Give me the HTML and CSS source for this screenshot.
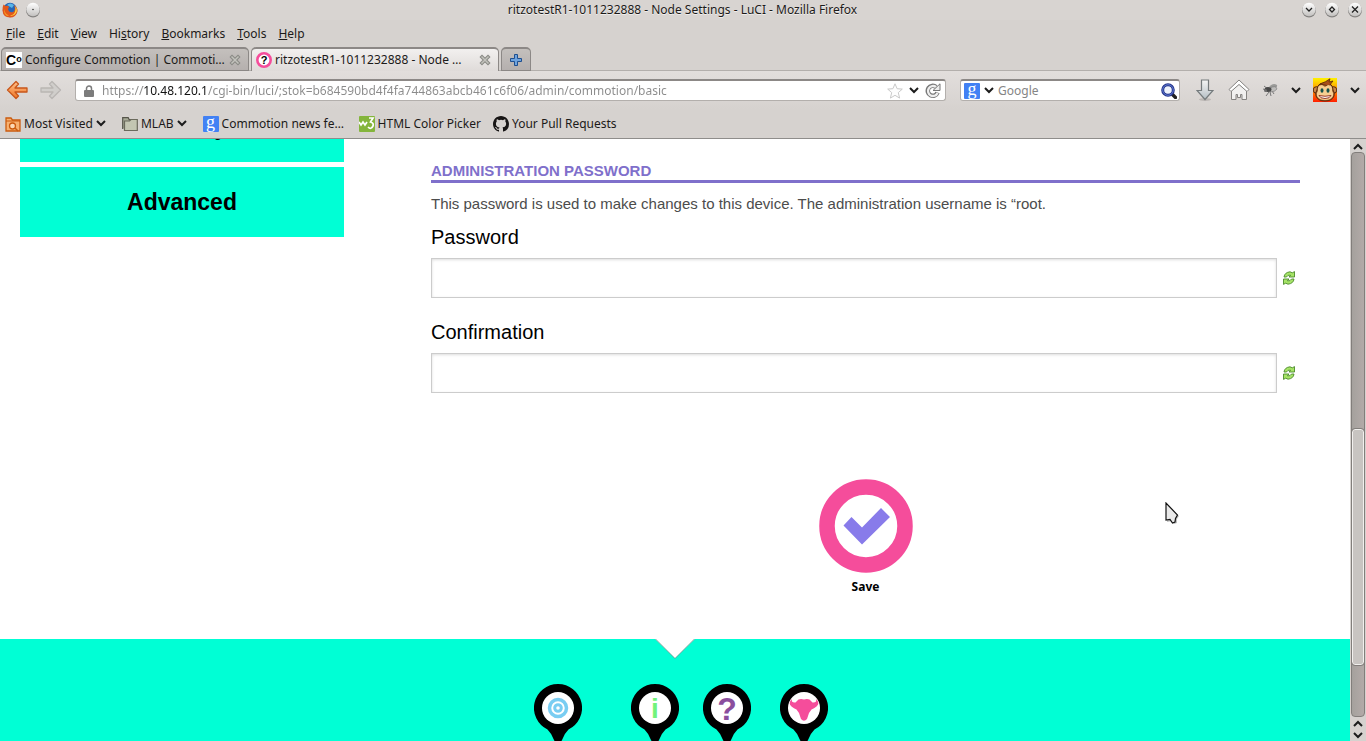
FILE: index.html
```html
<!DOCTYPE html>
<html lang="en">
<head>
<meta charset="utf-8">
<title>ritzotestR1-1011232888 - Node Settings - LuCI</title>
<link rel="stylesheet" href="styles.css">
</head>
<body>
<svg class="defs" aria-hidden="true">
  <defs>
    <symbol id="chevron" viewBox="0 0 10 7"><path d="M1 1l4 4 4-4" fill="none" stroke="#1c1c1c" stroke-width="2"/></symbol>
    <symbol id="chevron-up" viewBox="0 0 10 7"><path d="M1 6l4-4 4 4" fill="none" stroke="#1c1c1c" stroke-width="2"/></symbol>
    <symbol id="cross" viewBox="0 0 12 12"><path d="M3 3l6 6M9 3l-6 6" fill="none" stroke="#8a8a85" stroke-width="3.600" stroke-linecap="square"/><path d="M3 3l6 6M9 3l-6 6" fill="none" stroke="#c3c3bd" stroke-width="1.500" stroke-linecap="square"/></symbol>
    <symbol id="refresh" viewBox="0 0 12 14">
      <g fill="#a6e466" stroke="#4c8a2c" stroke-width=".9">
        <path id="half" d="M1 6Q1.500 1.500 7 .8L9.300 1.800 11.500 .6V6H6L7.600 4.200Q4.600 3.600 3.500 6z"/>
        <path d="M11 8Q10.500 12.500 5 13.200L2.700 12.200 .5 13.400V8H6L4.400 9.800Q7.400 10.400 8.500 8z"/>
      </g>
    </symbol>
    <symbol id="pin" viewBox="0 0 48 60"><path d="M24 0a24 24 0 0 1 10.500 45.600Q31 49 28.500 55L26 60h-4l-2.500-5Q17 49 13.500 45.600A24 24 0 0 1 24 0z"/><circle cx="24" cy="24" r="16" fill="#fff"/></symbol>
    <linearGradient id="orange" x2="0" y2="1"><stop stop-color="#ffc08a"/><stop offset="1" stop-color="#ef7625"/></linearGradient>
    <linearGradient id="knob" x2="0" y2="1"><stop stop-color="#fff"/><stop offset="1" stop-color="#c3c1bf"/></linearGradient>
    <linearGradient id="steel" x2="0" y2="1"><stop stop-color="#f5f5f5"/><stop offset="1" stop-color="#b4bec4"/></linearGradient>
    <linearGradient id="fire" x2="0" y2="1"><stop stop-color="#fff200"/><stop offset=".45" stop-color="#ff9c00"/><stop offset="1" stop-color="#ff1e00"/></linearGradient>
  </defs>
</svg>

<div class="window">
  <header class="titlebar">
    <div class="title-side">
      <svg class="i16" viewBox="0 0 16 16"><circle cx="8" cy="8" r="7.200" fill="#2765b5"/><path d="M5 3Q8 0 12 3L10 6z" fill="#58b5e8"/><path d="M1.500 2.500L3.500 4Q6 3 7 5L6 7Q7 11 11 10Q13 9 13 6L12 3Q16 6 15.500 9.500Q14 15.500 8 15.500Q1 15.500 .5 8.500Q.3 5 1.500 2.500z" fill="#e2571b"/><path d="M13.300 4Q16 8 14 11Q12 14.500 8 13.500Q12 13 13 10Q14 7 13.300 4z" fill="#ffd33d"/><path d="M2 7Q3 12 7 13.500L5 14Q1.500 12 2 7z" fill="#f89a25"/></svg>
      <button class="knob" aria-label="Window menu"><svg viewBox="0 0 16 16"><circle cx="8" cy="8.500" r="7" fill="#858381"/><circle cx="8" cy="7.500" r="6.700" fill="url(#knob)"/><circle cx="8" cy="7.500" r=".8" fill="#333"/></svg></button>
    </div>
    <div class="title">ritzotestR1-1011232888 - Node Settings - LuCI - Mozilla Firefox</div>
    <div class="title-side end">
      <button class="knob" aria-label="Minimize"><svg viewBox="0 0 16 16"><circle cx="8" cy="8.500" r="7" fill="#858381"/><circle cx="8" cy="7.500" r="6.700" fill="url(#knob)"/><path d="M5 6l3 3 3-3" fill="none" stroke="#222" stroke-width="1.300"/></svg></button>
      <button class="knob" aria-label="Maximize"><svg viewBox="0 0 16 16"><circle cx="8" cy="8.500" r="7" fill="#858381"/><circle cx="8" cy="7.500" r="6.700" fill="url(#knob)"/><path d="M8 5l2.500 2.500L8 10 5.500 7.500z" fill="none" stroke="#222" stroke-width="1.300"/></svg></button>
      <button class="knob" aria-label="Close"><svg viewBox="0 0 16 16"><circle cx="8" cy="8.500" r="7" fill="#858381"/><circle cx="8" cy="7.500" r="6.700" fill="url(#knob)"/><path d="M5 4.500l6 6M11 4.500l-6 6" fill="none" stroke="#222" stroke-width="1.300"/></svg></button>
    </div>
  </header>

  <nav class="menubar" aria-label="Menu">
    <button><u>F</u>ile</button><button><u>E</u>dit</button><button><u>V</u>iew</button><button>Hi<u>s</u>tory</button><button><u>B</u>ookmarks</button><button><u>T</u>ools</button><button><u>H</u>elp</button>
  </nav>

  <div class="tabs">
    <div class="tab">
      <span class="fav-co">C<small>o</small></span>
      <button class="tab-label">Configure Commotion | Commoti…</button>
      <button class="icon" aria-label="Close tab"><svg class="i12"><use href="#cross"/></svg></button>
    </div>
    <div class="tab active">
      <svg class="i16" viewBox="0 0 16 16"><circle cx="8" cy="8" r="6.700" fill="#fff" stroke="#f54d9b" stroke-width="2.600"/><text class="svg-bold" x="8" y="12" font-size="11" text-anchor="middle">?</text></svg>
      <button class="tab-label">ritzotestR1-1011232888 - Node …</button>
      <button class="icon" aria-label="Close tab"><svg class="i12"><use href="#cross"/></svg></button>
    </div>
    <button class="tab new" aria-label="New tab"><svg class="i12" viewBox="0 0 12 12"><path d="M4.500 .5h3v4h4v3h-4v4h-3v-4h-4v-3h4z" fill="#6ea3dd" stroke="#1f4f8f"/></svg></button>
  </div>

  <div class="navbar">
    <button class="icon" aria-label="Back"><svg class="arrow" viewBox="0 0 22 20"><path d="M10 1.500L1.500 10 10 18.500l2.500-2.500-3.500-4H21V8H9l3.500-4z" fill="url(#orange)" stroke="#c8561a" stroke-width="1.300" stroke-linejoin="round"/></svg></button>
    <button class="icon forward" aria-label="Forward"><svg class="arrow" viewBox="0 0 22 20"><path d="M12 1.500L20.500 10 12 18.500 9.500 16l3.500-4H1V8h12L9.500 4z" fill="#d0cecb" stroke="#b9b6b3" stroke-width="1.300" stroke-linejoin="round"/></svg></button>
    <div class="field address">
      <svg class="lock" viewBox="0 0 10 12"><path d="M2.500 6V3.500a2.500 2.500 0 0 1 5 0V6" fill="none" stroke="#7c7c7c" stroke-width="1.500"/><rect y="5" width="10" height="7" rx="1" fill="#7c7c7c"/></svg>
      <input class="url" type="text" aria-label="Address" value="https://10.48.120.1/cgi-bin/luci/;stok=b684590bd4f4fa744863abcb461c6f06/admin/commotion/basic">
      <button class="icon" aria-label="Bookmark this page"><svg class="i16" viewBox="0 0 16 16"><path d="M8 .8l2.100 4.900 5.200.4-4 3.500 1.300 5.500L8 12.300l-4.600 2.800 1.300-5.500-4-3.500 5.200-.4z" fill="#fdfdfd" stroke="#c9c9c9"/></svg></button>
      <button class="icon" aria-label="History"><svg class="chev"><use href="#chevron"/></svg></button>
      <button class="icon" aria-label="Reload"><svg class="i16" viewBox="0 0 16 16"><path d="M12.500 9.500A5 5 0 1 1 11 4" fill="none" stroke="#777" stroke-width="4.500"/><path d="M12.600 10A5 5 0 1 1 11 4" fill="none" stroke="#eee" stroke-width="2.300"/><path d="M8 7.500h7V.8z" fill="#eee" stroke="#777"/></svg></button>
    </div>
    <div class="field search">
      <span class="fav-g">g</span>
      <button class="icon" aria-label="Search engine"><svg class="chev"><use href="#chevron"/></svg></button>
      <input type="text" aria-label="Search" placeholder="Google">
      <button class="icon" aria-label="Go"><svg class="i16" viewBox="0 0 16 16"><path d="M11 11l3.500 3.500" stroke="#222" stroke-width="3.400" stroke-linecap="round"/><circle cx="7" cy="7" r="5.300" fill="#eef3fc" stroke="#26358c" stroke-width="3"/><circle cx="7" cy="7" r="5.300" fill="none" stroke="#5f7bd0" stroke-width="1"/></svg></button>
    </div>
    <div class="tools">
      <button class="icon" aria-label="Downloads"><svg class="down" viewBox="0 0 18 22"><ellipse cx="9" cy="20.500" rx="6" ry="1.500" fill="#bbb7b4"/><path d="M5.500 1h7v10.500H17L9 20.500 1 11.500h4.500z" fill="url(#steel)" stroke="#747a7c" stroke-width="1.200"/></svg></button>
      <button class="icon home-button" aria-label="Home"><svg class="home" viewBox="0 0 22 22"><path d="M3.500 11.500v9h4.500v-5h1.500v3h3v-3H14v5h4.500v-9L11 5z" fill="#f1f0ef" stroke="#858381"/><path d="M11 1L1 10.500l2 2L11 5.500l8 7 2-2z" fill="#fff" stroke="#858381"/></svg></button>
      <button class="icon fly-button" aria-label="Fly"><svg class="fly" viewBox="0 0 16 14"><path d="M1 6l4 1M2 3l4 3M4 13l3-4M9 13l-1-4M12 11l-2-3" stroke="#777" stroke-width="1"/><path d="M7 4Q11-1 15 2Q16 5 10 7z" fill="#9a9a98"/><path d="M8 5Q14 2 15 6Q13 9 8 9z" fill="#bebdbb" stroke="#777" stroke-width=".6"/><ellipse cx="6" cy="6.500" rx="3.500" ry="2.500" fill="#484848"/><circle cx="3.500" cy="7.500" r="1.500" fill="#707070"/></svg></button>
      <button class="icon" aria-label="Fly menu"><svg class="chev"><use href="#chevron"/></svg></button>
      <button class="icon monkey-button" aria-label="Monkey"><svg class="monkey" viewBox="0 0 24 24"><path fill="url(#fire)" d="M0 0h24v24H0z"/><circle cx="3.500" cy="12" r="3.300" fill="#c98746" stroke="#59290b"/><circle cx="20.500" cy="12" r="3.300" fill="#c98746" stroke="#59290b"/><path d="M4 12Q4 5 12 5t8 7q2 3 1 6-2 5-9 5t-9-5q-1-3 1-6z" fill="#a96b32" stroke="#59290b"/><path d="M7 6Q13 4 17 .8L16 4l4-1-4 5z" fill="#a6501a" stroke="#59290b" stroke-width=".8"/><path d="M5 13Q4 7 9 7l3 2 3-2q5 0 4 6 2 2 1 5-2 4-8 4t-8-4q-1-3 1-5z" fill="#f6cf91"/><ellipse cx="9" cy="12.500" rx="1.500" ry="2.300" fill="#15514a"/><ellipse cx="15" cy="12.500" rx="1.500" ry="2.300" fill="#15514a"/><path d="M6 17.500q6 1.500 12 0-1 3-6 3t-6-3z" fill="#fff" stroke="#8d2616" stroke-width=".9"/></svg></button>
      <button class="icon" aria-label="Monkey menu"><svg class="chev"><use href="#chevron"/></svg></button>
    </div>
  </div>

  <nav class="bookmarks" aria-label="Bookmarks">
    <button class="bm visited"><svg class="i16" viewBox="0 0 16 16"><path d="M1 15V2h5l1.500 2H15v11z" fill="#f7b170" stroke="#cb5b0e" stroke-width="1.300"/><path d="M1 5h14" stroke="#cb5b0e"/><circle cx="7.500" cy="10" r="3" fill="#fbd9b6" stroke="#cb5b0e" stroke-width="1.300"/><path d="M10 12l3 3" stroke="#cb5b0e" stroke-width="1.500"/></svg>Most Visited<svg class="chev"><use href="#chevron"/></svg></button>
    <button class="bm mlab"><svg class="i16" viewBox="0 0 16 16"><path d="M.7 13V1.700h5.500l1 2H12" fill="#a8ab98" stroke="#56554a" stroke-width="1.200"/><path d="M2.500 14.500V5h5l1.500-1.500h6.300v11z" fill="#c3c6b2" stroke="#6a6a5c" stroke-width="1.200"/></svg>MLAB<svg class="chev"><use href="#chevron"/></svg></button>
    <a class="bm news" href="#"><span class="fav-g">g</span>Commotion news fe…</a>
    <a class="bm picker" href="#"><svg class="i16" viewBox="0 0 16 16"><rect width="16" height="16" rx="1" fill="#84b53c"/><path d="M0 6l2 3 2-3 2 3 2-3M10 2h4l-2.500 4Q15 7 14 10q-2 4-5 1" fill="none" stroke="#fff" stroke-width="1.700"/></svg>HTML Color Picker</a>
    <a class="bm" href="#"><svg class="i16" viewBox="0 0 16 16"><path fill="#171515" fill-rule="evenodd" d="M8 0C3.580 0 0 3.580 0 8c0 3.540 2.290 6.530 5.470 7.590.4.070.55-.17.55-.38 0-.19-.01-.82-.01-1.490-2.010.37-2.530-.49-2.690-.94-.09-.23-.48-.94-.82-1.130-.28-.15-.68-.52-.01-.53.63-.01 1.080.58 1.230.82.72 1.210 1.870.87 2.330.66.070-.52.28-.87.51-1.070-1.780-.2-3.640-.89-3.640-3.950 0-.87.31-1.590.82-2.150-.08-.2-.36-1.020.08-2.120 0 0 .67-.21 2.200.82a7.600 7.600 0 0 1 4 0c1.530-1.040 2.200-.82 2.200-.82.44 1.100.16 1.920.08 2.120.51.560.82 1.270.82 2.150 0 3.070-1.870 3.750-3.650 3.950.29.25.54.73.54 1.480 0 1.070-.01 1.930-.01 2.200 0 .21.15.46.55.38A8 8 0 0 0 16 8c0-4.420-3.580-8-8-8z"/></svg>Your Pull Requests</a>
  </nav>

  <div class="viewport">
    <div class="page">
      <div class="columns">
        <nav class="side" aria-label="Settings">
          <a href="#">Security</a>
          <a href="#">Advanced</a>
        </nav>
        <main class="main">
          <form>
            <h2>Administration Password</h2>
            <p>This password is used to make changes to this device. The administration username is “root.</p>
            <div class="group">
              <label for="pw">Password</label>
              <div class="entry"><input id="pw" type="password"><button type="button" class="icon" aria-label="Reveal password"><svg class="refresh"><use href="#refresh"/></svg></button></div>
            </div>
            <div class="group">
              <label for="pw2">Confirmation</label>
              <div class="entry"><input id="pw2" type="password"><button type="button" class="icon" aria-label="Reveal confirmation"><svg class="refresh"><use href="#refresh"/></svg></button></div>
            </div>
            <button type="button" class="save">
              <svg viewBox="0 0 94 94"><circle cx="47" cy="47" r="39" fill="#fff" stroke="#f54d9b" stroke-width="15.500"/><path d="M24.500 46.500l8-8.500 10.500 10.500L62 29l9 9-28 27.500z" fill="#887bea"/></svg>
              Save
            </button>
          </form>
        </main>
      </div>
      <footer class="footer">
        <svg class="notch" viewBox="0 0 40 20"><path d="M0 0h40L20 19.500z" fill="#fff"/><path d="M.5 0L20 19.500 39.500 0" fill="none" stroke="#4a8377" stroke-width=".7"/></svg>
        <div class="pins">
          <a class="pin wide" href="#" aria-label="Network"><svg viewBox="0 0 48 60"><use href="#pin"/><g fill="none" stroke="#79cdf2"><circle cx="24" cy="24" r="8.500" stroke-width="3.500"/><circle cx="24" cy="24" r="3.300" stroke-width="3"/></g></svg></a>
          <a class="pin info" href="#" aria-label="Information"><svg viewBox="0 0 48 60"><use href="#pin"/><text class="svg-bold" x="24" y="34" font-size="28" text-anchor="middle" fill="#72f37b">i</text></svg></a>
          <a class="pin help" href="#" aria-label="Help"><svg viewBox="0 0 48 60"><use href="#pin"/><text class="svg-bold" x="24" y="36" font-size="32" text-anchor="middle" fill="#8a4e9e">?</text></svg></a>
          <a class="pin bug" href="#" aria-label="Report"><svg viewBox="0 0 48 60"><use href="#pin"/><path d="M12 15Q7.500 19 11.500 22.500Q14 24.500 16.500 25.500L19 29 21 35Q24 38.500 27 35L29 29 31.500 25.500Q34 24.500 36.500 22.500Q40.500 19 36 15Q37 19 32.500 18.500L29.500 15.500Q27 14.500 24 15.500Q21 14.500 18.500 15.500L15.500 18.500Q11 19 12 15z" fill="#f54d9b"/></svg></a>
        </div>
      </footer>
    </div>
    <div class="scrollbar">
      <button class="icon" aria-label="Scroll up"><svg class="chev"><use href="#chevron-up"/></svg></button>
      <div class="track"><div class="thumb"></div></div>
      <button class="icon" aria-label="Scroll up"><svg class="chev"><use href="#chevron-up"/></svg></button>
      <button class="icon" aria-label="Scroll down"><svg class="chev"><use href="#chevron"/></svg></button>
    </div>
  </div>
</div>
<svg class="cursor" viewBox="0 0 16 24"><path d="M2 3v17l5-1 2 3 3-1v-4l2-3z" fill="#000" opacity=".25"/><path d="M1 1v17l4-.5 2.500 3.500 2.500-1 .5-3.500L12.500 13z" fill="#e9e9e9" stroke="#111" stroke-width="1.200"/></svg>
</body>
</html>
```
FILE: styles.css
```css
* { box-sizing: border-box; }
body {
  margin: 0;
  font: 12px/16px "Noto Sans", sans-serif;
  color: #1c1a19;
  background: #d6d2cf;
}
button, input {
  font: inherit;
  color: inherit;
  margin: 0;
  padding: 0;
  border: 0;
  background: none;
  outline: 0;
}
a { color: inherit; text-decoration: none; }
svg { display: block; flex: none; }
.defs { position: absolute; width: 0; height: 0; }
.icon { display: flex; align-items: center; justify-content: center; flex: none; }
.i16 { width: 16px; height: 16px; }
.i12 { width: 12px; height: 12px; }
.chev { width: 10px; height: 7px; }
.svg-bold { font-family: "Liberation Sans", sans-serif; font-weight: bold; }

.window { display: flex; flex-direction: column; height: 100vh; overflow: hidden; }

.titlebar { display: flex; align-items: center; height: 20px; padding: 0 3px 0 2px; background: #d8d4d1; }
.title-side { display: flex; flex: 1; align-items: center; gap: 7px; }
.title-side.end { justify-content: flex-end; }
.title { text-shadow: 0 1px 0 #f0eeec; }
.knob svg { width: 16px; height: 16px; }

.menubar { display: flex; align-items: center; gap: 12px; height: 27px; padding: 0 6px; }

.tabs { display: flex; gap: 2px; height: 24px; padding: 0 1px; box-shadow: inset 0 -1px #b3afac; }
.tab {
  display: flex;
  align-items: center;
  width: 248px;
  padding: 0 7px 0 4px;
  gap: 3px;
  border: 1px solid #8c8886;
  border-top-width: 2px;
  border-radius: 5px 5px 0 0;
  background: linear-gradient(#c4c0bd, #b5b0ae);
}
.tab.active { border-bottom: 0; background: linear-gradient(#f2f0ef, #dfdbd9); }
.tab.new { width: 30px; padding: 0; justify-content: center; }
.tab-label { flex: 1; white-space: nowrap; text-align: left; }
.fav-co { width: 16px; height: 16px; background: #fff; font: bold 14px/16px "Liberation Sans", sans-serif; white-space: nowrap; display: flex; color: #000; flex: none; }
.fav-co small { font-size: 9px; line-height: 14px; }
.fav-g { width: 16px; height: 16px; flex: none; border-radius: 1px; background: #4281f4; color: #fff; font: 18px/12px "Liberation Serif", serif; text-align: center; }

.navbar { display: flex; align-items: center; height: 38px; padding: 0 6px; background: linear-gradient(#e2dedc, #d6d2cf); }
.arrow { width: 22px; height: 20px; }
.forward { margin: 0 13px 0 12px; }
.field {
  display: flex;
  align-items: center;
  height: 22px;
  border: 1px solid #b3afac;
  border-top: 2px solid #8c8886;
  border-radius: 3px;
  background: #fff;
}
.field input { flex: 1; min-width: 0; }
.address { flex: 1; gap: 6px; padding: 0 4px 0 8px; }
.lock { width: 10px; height: 12px; margin-right: 2px; }
.url {
  color: transparent;
  background: linear-gradient(90deg, #8b8b8b 41px, #111 41px, #111 106px, #8b8b8b 106px);
  background-clip: text;
  -webkit-background-clip: text;
}
.search { width: 220px; margin-left: 14px; padding: 0 2px 0 3px; gap: 4px; }
.search input::placeholder { color: #858585; opacity: 1; }
.tools { display: flex; align-items: center; margin-left: 16px; }
.down { width: 18px; height: 22px; }
.home { width: 22px; height: 22px; }
.home-button { margin-left: 14px; }
.fly { width: 16px; height: 14px; }
.fly-button { margin: 0 13px 0 12px; }
.monkey { width: 24px; height: 24px; }
.monkey-button { margin: 0 13px 0 12px; }

.bookmarks { display: flex; align-items: center; height: 30px; padding: 0 5px; border-bottom: 1px solid #8f8d8b; }
.bm { display: flex; align-items: center; gap: 3px; white-space: nowrap; }
.visited, .mlab { margin-right: 16px; }
.news { width: 144px; margin-right: 12px; }
.picker { margin-right: 12px; }

.viewport { display: flex; flex: 1; min-height: 0; }
.page {
  flex: 1;
  min-width: 0;
  overflow: hidden;
  display: flex;
  flex-direction: column;
  background: #fff;
  font-family: "Liberation Sans", sans-serif;
}
.columns { display: flex; align-items: flex-start; justify-content: space-between; padding: 0 50px 44px 20px; }
.side { display: flex; flex-direction: column; gap: 5px; width: 26%; max-width: 324px; margin-top: -47px; }
.side a { padding: 21px 0; background: #00ffd5; color: #000; font-size: 23px; line-height: 28px; font-weight: bold; text-align: center; }
.main { width: 68%; max-width: 869px; padding-top: 23px; }
h2 { margin: 0; font-size: 15px; line-height: 18px; text-transform: uppercase; color: #7f70cb; border-bottom: 3px solid #7f70cb; }
p { margin: 11px 0; font-size: 15px; line-height: 20px; color: #4c4c4c; }
.group { margin-bottom: 22px; }
.group label { display: block; font-size: 20px; line-height: 24px; color: #000; padding-bottom: 9px; }
.entry { display: flex; align-items: center; gap: 6px; padding-right: 5px; }
.entry input { flex: 1; height: 40px; padding: 0 8px; border: 1px solid #ccc; box-shadow: inset 0 1px 3px #ddd; font-size: 20px; }
.refresh { width: 12px; height: 14px; }
.save { display: flex; flex-direction: column; align-items: center; gap: 6px; margin: 86px auto 0; font: bold 12px/16px "Noto Sans", sans-serif; color: #000; }
.save svg { width: 94px; height: 94px; }

.footer { flex: 1 0 auto; background: #00ffd5; }
.notch { width: 40px; height: 20px; margin: 0 auto; }
.pins { display: flex; justify-content: center; padding-top: 25px; }
.pin { display: flex; justify-content: center; }
.pin svg { width: 48px; height: 60px; }
.wide { width: 114px; }
.info { width: 80px; }
.help { width: 64px; }
.bug { width: 90px; }

.scrollbar { display: flex; flex-direction: column; align-items: center; width: 16px; padding-top: 1px; background: #d6d2cf; }
.scrollbar .icon { height: 12px; }
.track { flex: 1; width: 14px; border: 1px solid #827e7b; border-radius: 4px; background: linear-gradient(90deg, #a5a19d, #b3aaa8); display: flex; flex-direction: column; }
.thumb { height: 42%; margin-top: auto; margin-bottom: 51px; border: 1px solid #f2f0ee; outline: 1px solid #827e7b; border-radius: 3px; background: #c8c4c1; }
.cursor { position: absolute; left: 1165px; top: 502px; width: 16px; height: 24px; }
```
